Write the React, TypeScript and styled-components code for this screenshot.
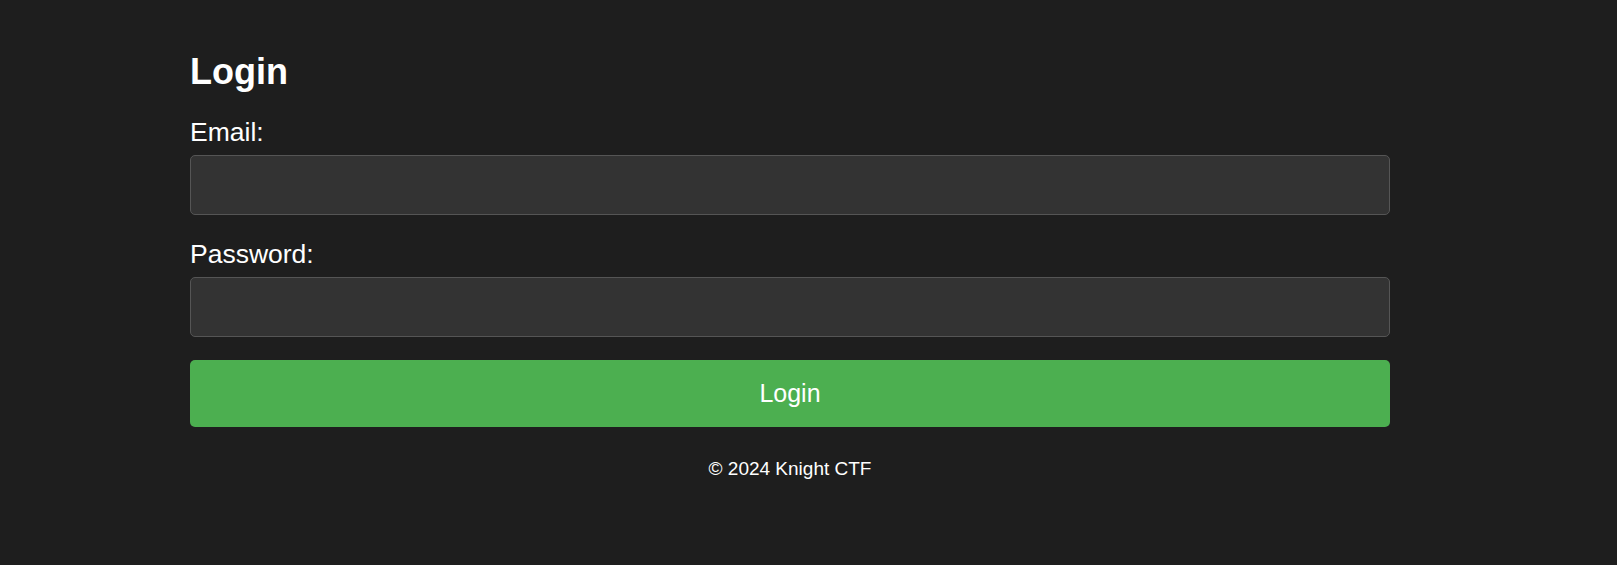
import React from "react";
import styled, { createGlobalStyle } from "styled-components";

const GlobalStyle = createGlobalStyle`
  html, body {
    margin: 0;
    padding: 0;
    background: #1e1e1e;
    color: #ffffff;
    font-family: "Liberation Sans", Arial, sans-serif;
  }
`;

const Page = styled.div`
  min-height: 565px;
  padding: 52px 0 0 190px;
  box-sizing: border-box;
`;

const Container = styled.div`
  width: 1200px;
  display: flex;
  flex-direction: column;
`;

const Heading = styled.h1`
  margin: 0 0 25px 0;
  font-size: 36px;
  line-height: 40px;
  font-weight: 700;
  color: #ffffff;
`;

const Form = styled.form`
  display: flex;
  flex-direction: column;
`;

const Field = styled.div<{ $gap: number }>`
  display: flex;
  flex-direction: column;
  gap: 8px;
  margin-bottom: ${(p) => p.$gap}px;
`;

const Label = styled.label`
  font-size: 26.5px;
  line-height: 30px;
  color: #ffffff;
`;

const Input = styled.input`
  box-sizing: border-box;
  width: 100%;
  height: 60px;
  margin: 0;
  padding: 0 16px;
  background: #333333;
  border: 1px solid #555555;
  border-radius: 5px;
  color: #ffffff;
  font-family: "Liberation Sans", Arial, sans-serif;
  font-size: 20px;
  outline: none;
`;

const Button = styled.button`
  box-sizing: border-box;
  width: 100%;
  height: 67px;
  margin: 0;
  padding: 0;
  background: #4caf50;
  border: none;
  border-radius: 5px;
  color: #ffffff;
  font-family: "Liberation Sans", Arial, sans-serif;
  font-size: 25px;
  cursor: pointer;
`;

const Footer = styled.footer`
  margin-top: 31px;
  text-align: center;
  font-size: 19px;
  line-height: 22px;
  color: #ffffff;
`;

export default function App() {
  return (
    <>
      <GlobalStyle />
      <Page>
        <Container>
          <Heading>Login</Heading>
          <Form onSubmit={(e) => e.preventDefault()}>
            <Field $gap={24}>
              <Label htmlFor="email">Email:</Label>
              <Input id="email" type="email" />
            </Field>
            <Field $gap={23}>
              <Label htmlFor="password">Password:</Label>
              <Input id="password" type="password" />
            </Field>
            <Button type="submit">Login</Button>
          </Form>
          <Footer>© 2024 Knight CTF</Footer>
        </Container>
      </Page>
    </>
  );
}
